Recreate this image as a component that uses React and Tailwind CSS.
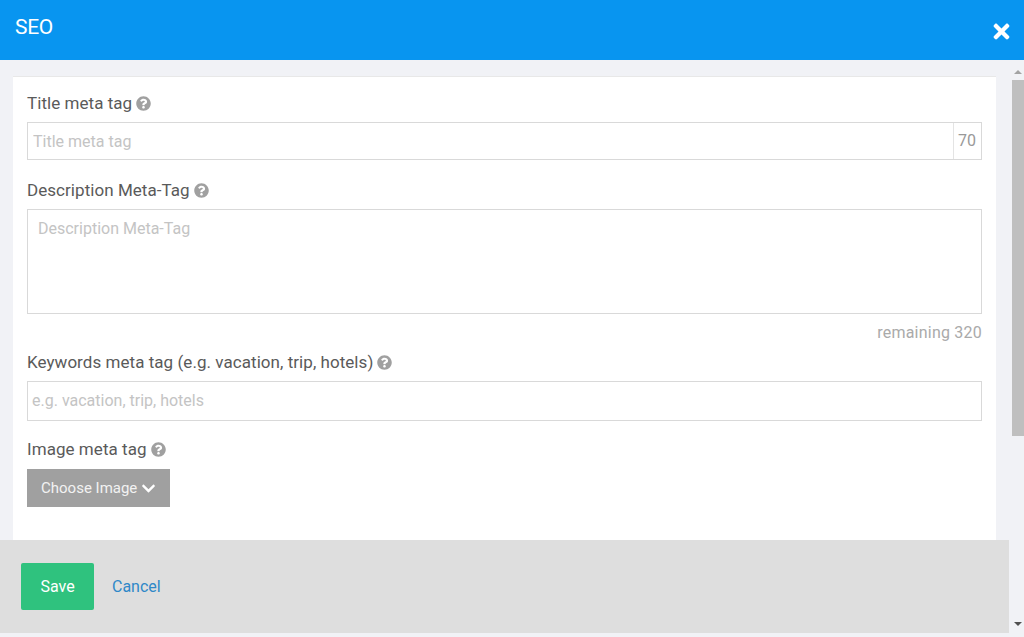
import { FaChevronDown, FaQuestionCircle, FaTimes } from "react-icons/fa";

function FieldLabel({ children }) {
  return (
    <div className="flex items-center gap-[4px] h-[24px] text-[17px] leading-[24px] tracking-[0.05px] text-[#5a5a5a]">
      <span>{children}</span>
      <FaQuestionCircle className="text-[15px] text-[#a0a0a0]" />
    </div>
  );
}

export default function App() {
  return (
    <div className="flex flex-col w-[1024px] h-[637px] overflow-hidden bg-[#f1f2f6] font-['Roboto',sans-serif]">
      <header className="flex justify-between shrink-0 h-[60px] bg-[#0895f0] text-white">
        <h1 className="pl-[15px] pt-[14px] text-[21px] leading-[26px] font-normal tracking-[-0.3px]">SEO</h1>
        <button className="pr-[11px] pt-[20px] h-fit">
          <FaTimes className="text-[23px]" />
        </button>
      </header>

      <div className="flex flex-1 min-h-0">
        <div className="flex flex-col w-[1009px]">
          <main className="flex-1 min-h-0 pl-[13px] pr-[13px] pt-[16px]">
            <div className="h-full bg-white border-t border-[#e8e8e8] px-[14px] pt-[14px]">
              <FieldLabel>Title meta tag</FieldLabel>
              <div className="flex mt-[7px] h-[38px] border border-[#d9d9d9] text-[16px]">
                <input
                  placeholder="Title meta tag"
                  className="flex-1 min-w-0 pl-[5px] pr-[4px] pt-[1px] outline-none placeholder:text-[#c4c4c4]"
                />
                <span className="flex items-center justify-center w-[28px] pr-[1px] border-l border-[#e4e4e4] text-[#999999]">70</span>
              </div>

              <div className="mt-[18px]">
                <FieldLabel>Description Meta-Tag</FieldLabel>
              </div>
              <textarea
                placeholder="Description Meta-Tag"
                className="block w-full mt-[7px] h-[105px] px-[10px] pt-[8px] pb-[6px] border border-[#d9d9d9] text-[16px] leading-[22px] outline-none resize-none placeholder:text-[#c4c4c4]"
              />
              <div className="mt-[7px] h-[24px] text-right text-[16px] leading-[24px] tracking-[0.22px] text-[#aaaaaa]">remaining 320</div>

              <div className="mt-[5px]">
                <FieldLabel>Keywords meta tag (e.g. vacation, trip, hotels)</FieldLabel>
              </div>
              <input
                placeholder="e.g. vacation, trip, hotels"
                className="block w-full mt-[7px] h-[40px] px-[4px] pb-[2px] border border-[#d9d9d9] text-[16px] outline-none placeholder:text-[#c4c4c4]"
              />

              <div className="mt-[16px]">
                <FieldLabel>Image meta tag</FieldLabel>
              </div>
              <button className="flex items-center gap-[4px] mt-[8px] w-[143px] h-[38px] pl-[14px] bg-[#a0a0a0] text-[15px] text-[#f2f2f2]">
                Choose Image
                <FaChevronDown className="text-[15px] text-white" />
              </button>
            </div>
          </main>

          <footer className="flex items-center shrink-0 h-[93px] mb-[4px] pl-[21px] bg-[#dedede]">
            <button className="w-[73px] h-[47px] rounded-[2px] bg-[#2fc27e] text-[16px] text-white">Save</button>
            <a className="ml-[18px] text-[16px] text-[#2f88c8]">Cancel</a>
          </footer>
        </div>

        <div className="flex flex-col items-end flex-1 pt-[5px] pb-[4px]">
          <div className="flex justify-center w-[12px] h-[15px] pt-[3px]">
            <div className="w-0 h-0 mt-[2px] border-x-[4px] border-x-transparent border-b-[4px] border-b-[#a3a3a3]" />
          </div>
          <div className="w-[12px] h-[356px] bg-[#bfbfbf]" />
          <div className="flex-1" />
          <div className="flex justify-center w-[12px] h-[15px]">
            <div className="w-0 h-0 mt-[4px] border-x-[4px] border-x-transparent border-t-[4px] border-t-[#505050]" />
          </div>
        </div>
      </div>
    </div>
  );
}
